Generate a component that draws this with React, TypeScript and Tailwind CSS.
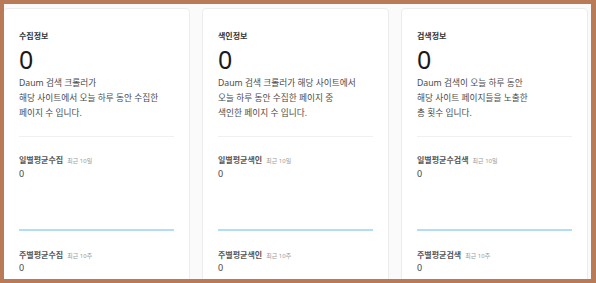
const CARDS = [
  {
    title: '수집정보',
    desc: ['Daum 검색 크롤러가', '해당 사이트에서 오늘 하루 동안 수집한', '페이지 수 입니다.'],
    daily: '일별평균수집',
    weekly: '주별평균수집',
  },
  {
    title: '색인정보',
    desc: ['Daum 검색 크롤러가 해당 사이트에서', '오늘 하루 동안 수집한 페이지 중', '색인한 페이지 수 입니다.'],
    daily: '일별평균색인',
    weekly: '주별평균색인',
  },
  {
    title: '검색정보',
    desc: ['Daum 검색이 오늘 하루 동안', '해당 사이트 페이지들을 노출한', '총 횟수 입니다.'],
    daily: '일별평균수검색',
    weekly: '주별평균검색',
  },
];

function StatCard({ title, desc, daily, weekly }: (typeof CARDS)[number]) {
  return (
    <div className="w-[187px] shrink-0 bg-white border border-[#ececec] rounded-[4px] px-[15px] pt-[21px] pb-6">
      <h3 className="text-[8px] leading-[12px] font-bold text-[#333]">{title}</h3>
      <div className="mt-[3px] text-[25px] leading-[28px] text-[#1a1a1a]">0</div>
      <p className="mt-[3px] text-[8.7px] leading-[15px] text-[#4a4a4a]">
        {desc.map((line) => (
          <span key={line} className="block whitespace-nowrap">
            {line}
          </span>
        ))}
      </p>
      <div className="mt-[15px] h-px bg-[#f0f0f0]" />

      <div className="mt-[17px] flex items-baseline gap-[4px]">
        <span className="text-[8px] leading-[12px] font-bold text-[#555]">{daily}</span>
        <span className="text-[6px] text-[#999]">최근 10일</span>
      </div>
      <div className="mt-[2px] text-[9px] leading-[12px] text-[#444]">0</div>
      <div className="mt-[49px] h-[2px] bg-[#b3dcf7]" />

      <div className="mt-[18px] flex items-baseline gap-[4px]">
        <span className="text-[8px] leading-[12px] font-bold text-[#555]">{weekly}</span>
        <span className="text-[6px] text-[#999]">최근 10주</span>
      </div>
      <div className="mt-[1px] text-[9px] leading-[12px] text-[#444]">0</div>
    </div>
  );
}

export default function App() {
  return (
    <div
      className="w-[596px] h-[283px] border-l-4 border-t-4 border-r-[5px] border-b-4 border-[#b97a58] overflow-hidden bg-[#fafafa]"
      style={{ fontFamily: '"Noto Sans", "Noto Sans CJK KR", sans-serif' }}
    >
      <div className="flex gap-[12px] pt-[4px] -ml-px">
        {CARDS.map((card) => (
          <StatCard key={card.title} {...card} />
        ))}
      </div>
    </div>
  );
}
